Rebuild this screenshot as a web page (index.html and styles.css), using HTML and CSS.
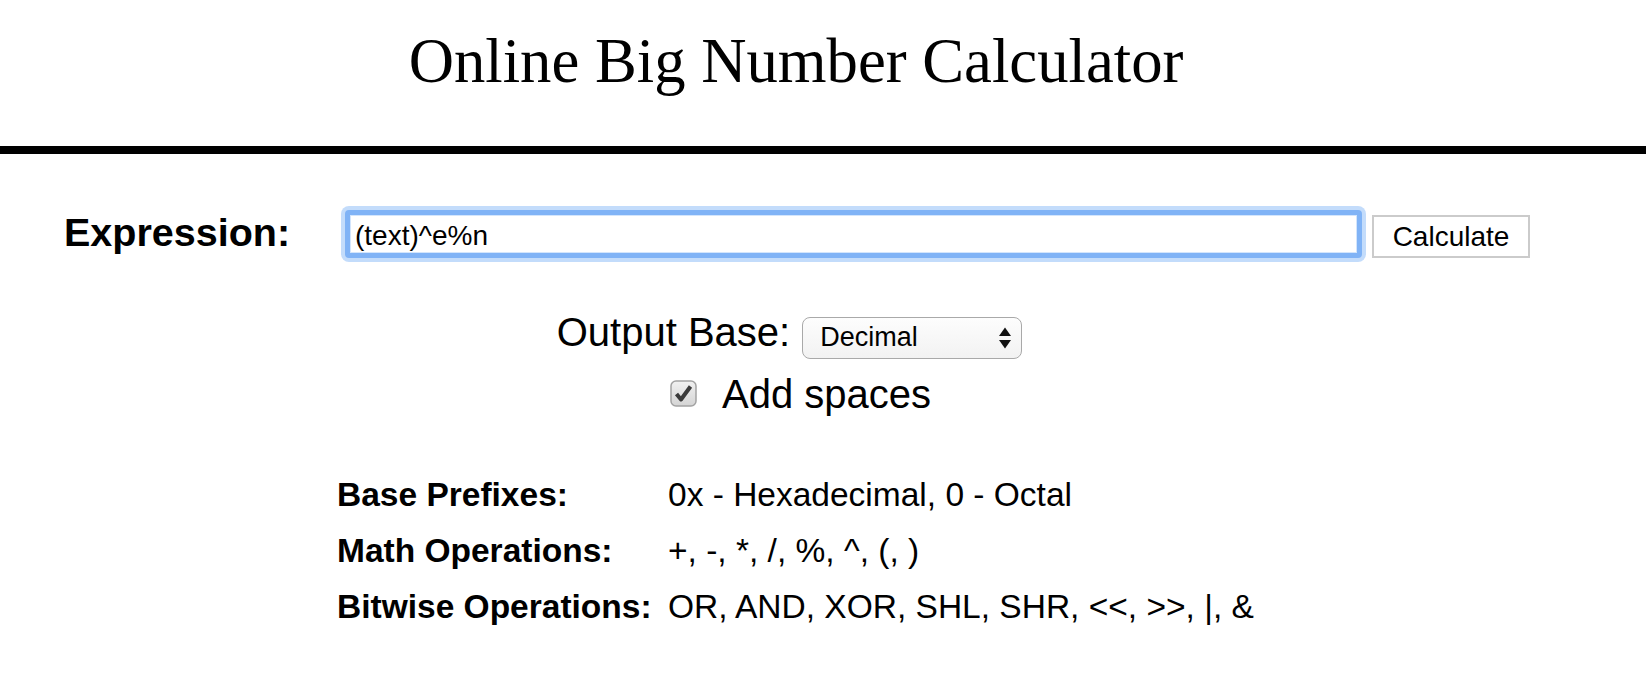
FILE: index.html
```html
<!DOCTYPE html>
<html lang="en">
<head>
<meta charset="utf-8">
<title>Online Big Number Calculator</title>
<link rel="stylesheet" href="styles.css">
</head>
<body>
<header class="top">
  <h1 class="title">Online Big Number Calculator</h1>
</header>
<div class="rule"></div>
<main class="main">
  <form class="expr-row" onsubmit="return false">
    <label class="expr-label" for="expr">Expression:</label>
    <input class="expr-input" id="expr" type="text" value="(text)^e%n">
    <button class="calc-btn" type="button">Calculate</button>
  </form>
  <div class="base-row">
    <span class="base-label">Output Base:</span>
    <div class="select">
      <span class="select-text">Decimal</span>
      <svg class="select-arrows" width="14" height="24" viewBox="0 0 14 24" aria-hidden="true">
        <polygon points="7,1.5 13,10 1,10" fill="#111"/>
        <polygon points="1,14 13,14 7,22.5" fill="#111"/>
      </svg>
    </div>
  </div>
  <div class="spaces-row">
    <span class="checkbox">
      <svg width="27" height="27" viewBox="0 0 27 27" aria-hidden="true">
        <defs>
          <linearGradient id="cbg" x1="0" y1="0" x2="0" y2="1">
            <stop offset="0" stop-color="#f1f1f1"/>
            <stop offset="1" stop-color="#d4d4d4"/>
          </linearGradient>
        </defs>
        <rect x="1" y="1" width="25" height="25" rx="5" fill="url(#cbg)" stroke="#a2a2a2" stroke-width="1.5"/>
        <path d="M6.5 14 L11 19.5 L20.5 6.5" fill="none" stroke="#3a3a3a" stroke-width="4" stroke-linejoin="round"/>
      </svg>
    </span>
    <span class="spaces-label">Add spaces</span>
  </div>
  <div class="help">
    <span class="help-key">Base Prefixes:</span><span class="help-val">0x - Hexadecimal, 0 - Octal</span>
    <span class="help-key">Math Operations:</span><span class="help-val">+, -, *, /, %, ^, (, )</span>
    <span class="help-key">Bitwise Operations:</span><span class="help-val">OR, AND, XOR, SHL, SHR, &lt;&lt;, &gt;&gt;, |, &amp;</span>
  </div>
</main>
</body>
</html>
```
FILE: styles.css
```css
html, body {
  margin: 0;
  padding: 0;
  background: #fff;
  color: #000;
}
body {
  font-family: "Liberation Sans", Arial, Helvetica, sans-serif;
}
.top {
  padding: 26px 54px 50px 0;
}
.title {
  margin: 0;
  font-family: "Liberation Serif", "Times New Roman", serif;
  font-weight: normal;
  font-size: 62.7px;
  line-height: 70px;
  text-align: center;
}
.rule {
  height: 8px;
  background: #000;
}
.expr-row {
  display: flex;
  align-items: center;
  margin: 56px 0 0 0;
  padding-left: 64px;
}
.expr-label {
  width: 281px;
  flex: none;
  font-weight: bold;
  font-size: 39.5px;
  line-height: 44px;
  padding-bottom: 4px;
}
.expr-input {
  box-sizing: border-box;
  width: 1017px;
  height: 48px;
  margin: 0;
  padding: 4px 5px 0 5px;
  border: 5px solid #80b3f6;
  border-radius: 4px;
  box-shadow: 0 0 0 4px #c3dcfb, inset 0 0 0 1px #d3e5fc;
  outline: none;
  font-family: "Liberation Sans", Arial, sans-serif;
  font-size: 28px;
  color: #000;
  background: #fff;
}
.calc-btn {
  box-sizing: border-box;
  width: 158px;
  height: 43px;
  margin: 4px 0 0 10px;
  padding: 2px 0 0 0;
  border: 2px solid #cbcbcb;
  background: #fff;
  font-family: "Liberation Sans", Arial, sans-serif;
  font-size: 28px;
  color: #000;
}
.base-row {
  display: flex;
  justify-content: center;
  align-items: baseline;
  gap: 12px;
  margin-top: 51px;
  padding-right: 67px;
}
.base-label {
  font-size: 40px;
  line-height: 46px;
}
.select {
  box-sizing: border-box;
  width: 220px;
  height: 42px;
  display: flex;
  align-items: center;
  justify-content: space-between;
  padding: 0 9px 0 17px;
  border: 1.5px solid #a9a9a9;
  border-radius: 8px;
  background: linear-gradient(#fdfdfd, #f2f2f2);
}
.select-text {
  font-size: 27px;
  line-height: 31px;
}
.select-arrows {
  display: block;
}
.spaces-row {
  display: flex;
  justify-content: center;
  align-items: center;
  gap: 25px;
  margin-top: 12px;
  padding-right: 45px;
}
.checkbox {
  display: flex;
  width: 27px;
  height: 27px;
}
.spaces-label {
  font-size: 40px;
  line-height: 46px;
}
.help {
  display: grid;
  grid-template-columns: 331px auto;
  margin-top: 50px;
  padding-left: 337px;
  font-size: 33.5px;
  line-height: 56px;
}
.help-key {
  font-weight: bold;
}
```
